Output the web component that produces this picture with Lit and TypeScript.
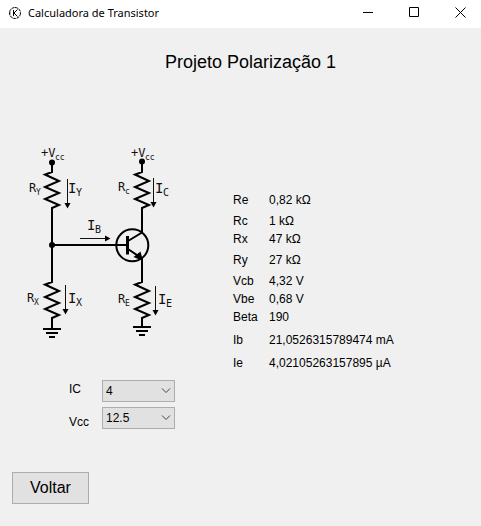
import { LitElement, html, svg, css } from "lit";
import { customElement, state } from "lit/decorators.js";

interface Reading {
  name: string;
  value: string;
  gap?: "small" | "large";
}

const READINGS: Reading[] = [
  { name: "Re", value: "0,82 kΩ" },
  { name: "Rc", value: "1 kΩ", gap: "small" },
  { name: "Rx", value: "47 kΩ" },
  { name: "Ry", value: "27 kΩ", gap: "small" },
  { name: "Vcb", value: "4,32 V", gap: "small" },
  { name: "Vbe", value: "0,68 V" },
  { name: "Beta", value: "190" },
  { name: "Ib", value: "21,0526315789474 mA", gap: "large" },
  { name: "Ie", value: "4,02105263157895 µA", gap: "large" },
];

@customElement("bias-circuit")
class BiasCircuit extends LitElement {
  static styles = css`
    :host { display: block; width: 156px; }
    .drawing { display: block; width: 100%; }
    .wire { fill: none; stroke: #000; stroke-width: 2; }
    .bar { stroke-width: 3; }
    .thin { fill: none; stroke: #111; stroke-width: 1; }
    .solid { fill: #000; }
    text { font-family: "DejaVu Sans Mono", monospace; fill: #111; }
    .name { font-size: 12px; }
    .current { font-size: 14px; }
    .sub { font-size: 8px; }
    .current-sub { font-size: 10px; }
  `;

  private resistor(x: number, y: number) {
    return svg`<path class="wire" d="M${x} ${y} v1 l-7 2.5 l14 6.5 l-14 6 l14 6 l-14 6 l14 6 l-7 3 v2"/>`;
  }

  private ground(x: number, y: number) {
    return svg`<path class="wire" d="M${x - 9} ${y} h18 M${x - 6} ${y + 4} h12 M${x - 3} ${y + 8} h6"/>`;
  }

  private arrow(x: number, y: number) {
    return svg`<path class="thin" d="M${x} ${y} v25"/>
      <path class="solid" d="M${x - 3} ${y + 24} h6 l-3 5.5 z"/>`;
  }

  private label(x: number, y: number, main: string, sub: string, current = false) {
    return svg`<text class=${current ? "current" : "name"} x=${x} y=${y}>${main}</text>
      <text class=${current ? "current-sub" : "sub"} x=${x + main.length * 7 + (current ? 1 : 0)} y=${y + 3}>${sub}</text>`;
  }

  render() {
    return html`<svg class="drawing" viewBox="24 144 156 198" role="img" aria-label="Circuito de polarização">
      <circle class="solid" cx="52" cy="162.5" r="3"/>
      <circle class="solid" cx="142" cy="161.5" r="3"/>
      <circle class="solid" cx="52" cy="245" r="3"/>
      <path class="wire" d="M52 162 V172 M52 208 V282 M52 318 V329"/>
      <path class="wire" d="M142 162 V172 M142 208 V232.5 L128 241 M128 249 L142 258.5 V282 M142 318 V327"/>
      <path class="wire" d="M52 245 H127"/>
      <path class="wire bar" d="M127.5 236 V254.5"/>
      <circle class="wire" cx="132.3" cy="245.3" r="16"/>
      <path class="solid" d="M133.5 257 L140.5 251.5 L143 261 Z"/>
      ${this.resistor(52, 171)} ${this.resistor(52, 281)}
      ${this.resistor(142, 171)} ${this.resistor(142, 281)}
      ${this.ground(52, 329)} ${this.ground(142, 327)}
      ${this.arrow(67.5, 179)} ${this.arrow(153.5, 178)}
      ${this.arrow(65.5, 285)} ${this.arrow(155.5, 286)}
      <path class="thin" d="M80 238.5 H106"/>
      <path class="solid" d="M105 235.5 V241.5 L110.5 238.5 Z"/>
      ${this.label(41, 157, "+V", "cc")} ${this.label(131, 157, "+V", "cc")}
      ${this.label(29, 192, "R", "Y")} ${this.label(118, 191, "R", "c")}
      ${this.label(27, 302, "R", "X")} ${this.label(118, 303, "R", "E")}
      ${this.label(68, 193, "I", "Y", true)} ${this.label(155, 193, "I", "C", true)}
      ${this.label(87, 230, "I", "B", true)}
      ${this.label(68, 303, "I", "X", true)} ${this.label(158, 304, "I", "E", true)}
    </svg>`;
  }
}

@customElement("app-root")
class AppRoot extends LitElement {
  @state() private ic = "4";
  @state() private vcc = "12.5";

  static styles = css`
    :host {
      display: flex;
      flex-direction: column;
      min-height: 100vh;
      background: #f0f0f0;
      color: #000;
      font: 12px/18px "Liberation Sans", Arial, sans-serif;
    }
    .titlebar { display: flex; align-items: center; height: 28px; background: #fff; }
    .app-icon { width: 14px; height: 14px; margin: 0 6px 0 8px; }
    .app-name { flex: 1; padding-bottom: 2px; font: 11px/18px "Noto Sans", "Open Sans", sans-serif; }
    .window-button {
      display: flex;
      align-items: center;
      justify-content: center;
      width: 46px;
      height: 28px;
      padding: 0 0 4px 5px;
      border: 0;
      background: none;
    }
    .glyph { width: 11px; height: 11px; fill: none; stroke: #000; stroke-width: 1; }
    .heading { margin: 22px 0 0 20px; font-size: 18px; line-height: 24px; font-weight: 400; text-align: center; }
    .content { display: grid; grid-template-columns: 209px 1fr; padding: 70px 24px 0; }
    .fields {
      display: grid;
      grid-template-columns: 33px 73px;
      row-gap: 5px;
      margin: 38px 0 0 45px;
    }
    .field-label { line-height: 18px; }
    .field-label.low { padding-top: 6px; }
    .picker { position: relative; display: block; }
    .select {
      appearance: none;
      box-sizing: border-box;
      width: 100%;
      height: 22px;
      padding: 0 20px 0 3px;
      border: 1px solid #adadad;
      border-radius: 0;
      background: #e1e1e1;
      color: #000;
      font: inherit;
    }
    .chevron {
      position: absolute;
      right: 4px;
      top: 8px;
      width: 10px;
      height: 6px;
      fill: none;
      stroke: #444;
      pointer-events: none;
    }
    .readings { align-self: start; margin-top: 47px; border-collapse: collapse; }
    .readings th { width: 36px; padding: 0; font-weight: 400; text-align: left; }
    .readings td { padding: 0; white-space: nowrap; }
    .readings .small > * { padding-top: 3px; }
    .readings .large > * { padding-top: 5px; }
    .back {
      align-self: flex-start;
      width: 77px;
      height: 32px;
      margin: 41px 12px 22px;
      padding: 0;
      border: 1px solid #adadad;
      background: #e1e1e1;
      color: #000;
      font: 16px/24px "Liberation Sans", Arial, sans-serif;
    }
  `;

  private chevron() {
    return html`<svg class="chevron" viewBox="0 0 10 6" aria-hidden="true"><path d="M1 .5 L5 4.5 L9 .5"/></svg>`;
  }

  render() {
    return html`
      <header class="titlebar">
        <svg class="app-icon" viewBox="0 0 14 14" fill="none" stroke="#000" aria-hidden="true">
          <circle cx="7" cy="6" r="5.5" stroke-dasharray="3 .6"/>
          <path d="M5.5 3 V9 M9.5 2.5 L6 6 L9.5 9.5 M1 6 H2.5"/>
        </svg>
        <span class="app-name">Calculadora de Transistor</span>
        <button class="window-button" aria-label="Minimizar">
          <svg class="glyph" viewBox="0 0 11 11"><path d="M0 5.5 H10"/></svg>
        </button>
        <button class="window-button" aria-label="Maximizar">
          <svg class="glyph" viewBox="0 0 11 11"><path d="M.5 .5 H9.5 V9.5 H.5 Z"/></svg>
        </button>
        <button class="window-button" aria-label="Fechar">
          <svg class="glyph" viewBox="0 0 11 11"><path d="M.5 .5 L10.5 10.5 M10.5 .5 L.5 10.5"/></svg>
        </button>
      </header>
      <h1 class="heading">Projeto Polarização 1</h1>
      <main class="content">
        <section>
          <bias-circuit></bias-circuit>
          <div class="fields">
            <label class="field-label" for="ic">IC</label>
            <span class="picker">
              <select class="select" id="ic" .value=${this.ic}
                @change=${(e: Event) => (this.ic = (e.target as HTMLSelectElement).value)}>
                <option>4</option>
              </select>
              ${this.chevron()}
            </span>
            <label class="field-label low" for="vcc">Vcc</label>
            <span class="picker">
              <select class="select" id="vcc" .value=${this.vcc}
                @change=${(e: Event) => (this.vcc = (e.target as HTMLSelectElement).value)}>
                <option>12.5</option>
              </select>
              ${this.chevron()}
            </span>
          </div>
        </section>
        <table class="readings">
          <tbody>
            ${READINGS.map((r) => html`<tr class=${r.gap ?? ""}><th scope="row">${r.name}</th><td>${r.value}</td></tr>`)}
          </tbody>
        </table>
      </main>
      <button class="back">Voltar</button>
    `;
  }
}
